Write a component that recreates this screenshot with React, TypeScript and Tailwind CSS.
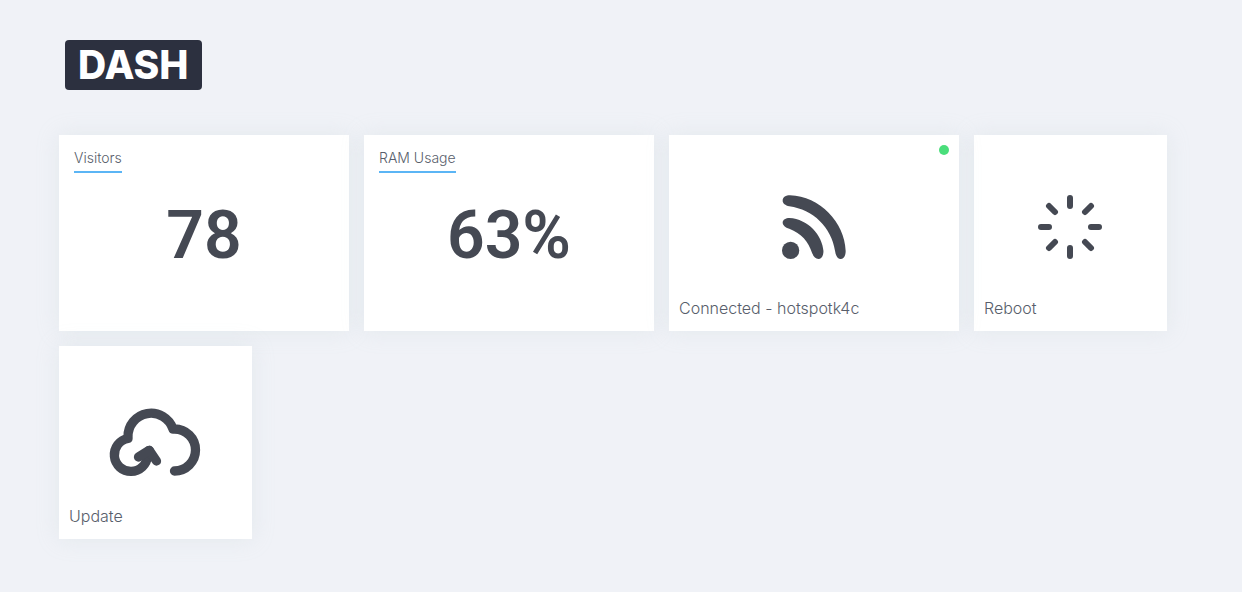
import type { ReactNode } from 'react';

const cardBase = 'bg-white shadow-[0_0_20px_rgba(190,208,212,0.25)]';

function StatCard({ title, value }: { title: string; value: string }) {
  return (
    <section className={`${cardBase} grid min-h-[196px] w-[290px] grid-rows-[1fr_auto_1fr] p-[15px]`}>
      <h2 className="self-start justify-self-start border-b-2 border-[#5bb5f5] pb-[5px] text-sm leading-4 font-light text-[#585e6b]">
        {title}
      </h2>
      <p className="pt-[6px] text-center font-['Roboto',sans-serif] text-[66px] leading-[64px] font-semibold text-[#454953]">
        {value}
      </p>
    </section>
  );
}

function TileContent({ label, children }: { label: string; children: ReactNode }) {
  return (
    <>
      <span className="flex flex-1 items-center justify-center">{children}</span>
      <span className="text-left text-base leading-6 font-light text-[#585e6b]">{label}</span>
    </>
  );
}

function SignalIcon() {
  return (
    <svg viewBox="36 28 193 193" className="size-16" fill="currentColor" aria-hidden="true">
      <path d="M60 29C150 32 225 110 228 197C228 213 221 221 213 221C204 221 198 212 196 197C185 125 130 72 58 62C46 59 38 53 38 45C38 34 48 29 60 29Z" />
      <path d="M58 97C115 100 158 150 161 197C161 213 154 221 146 221C137 221 131 213 127 204C115 167 95 145 58 130C46 126 38 119 38 111C38 102 48 97 58 97Z" />
      <circle cx="62" cy="195" r="26" />
    </svg>
  );
}

function LoaderIcon() {
  return (
    <svg
      viewBox="-32 -32 65 64"
      className="h-16 w-[65px]"
      fill="none"
      stroke="currentColor"
      strokeWidth="6"
      strokeLinecap="round"
      aria-hidden="true"
    >
      <path d="M0-29V-21M0 21V29M-29 0H-21M21 0H29M-21-21L-15-15M15 15L21 21M-21 21L-15 15M15-15L21-21" />
    </svg>
  );
}

function CloudIcon() {
  return (
    <svg
      viewBox="110 398 91 77"
      className="h-[77px] w-[91px] overflow-visible"
      fill="none"
      stroke="currentColor"
      strokeWidth="9.3"
      strokeLinecap="round"
      strokeLinejoin="round"
      aria-hidden="true"
    >
      <path d="M174.5 471A21 21 0 0 0 174.5 429H173A23.1 23.1 0 0 0 128 437V438.5A16.6 16.6 0 1 0 147.5 456L149.3 450.5" />
      <path d="M138.5 457L149.3 450.3L156.5 461" />
    </svg>
  );
}

export default function App() {
  return (
    <main className="min-h-screen bg-[#f0f2f7] px-[59px] py-10 font-['Inter',sans-serif] text-[#454953]">
      <header className="flex pb-[45px] pl-[6px]">
        <h1 className="rounded bg-[#2c303f] px-[13px] text-[39px] leading-[50px] font-extrabold text-white">
          DASH
        </h1>
      </header>
      <div className="flex flex-wrap gap-[15px]">
        <StatCard title="Visitors" value="78" />
        <StatCard title="RAM Usage" value="63%" />
        <section className={`${cardBase} relative flex min-h-[196px] w-[290px] flex-col px-[10px] pt-[23px] pb-[11px]`}>
          <span className="absolute top-[10px] right-[10px] size-[10px] rounded-full bg-[#4ade7b]" />
          <TileContent label="Connected - hotspotk4c">
            <SignalIcon />
          </TileContent>
        </section>
        <button type="button" className={`${cardBase} flex min-h-[193px] w-[193px] cursor-pointer flex-col items-stretch px-[10px] pt-[23px] pb-[11px]`}>
          <TileContent label="Reboot">
            <LoaderIcon />
          </TileContent>
        </button>
        <button type="button" className={`${cardBase} flex min-h-[193px] w-[193px] cursor-pointer flex-col items-stretch px-[10px] pt-[23px] pb-[11px]`}>
          <TileContent label="Update">
            <CloudIcon />
          </TileContent>
        </button>
      </div>
    </main>
  );
}
